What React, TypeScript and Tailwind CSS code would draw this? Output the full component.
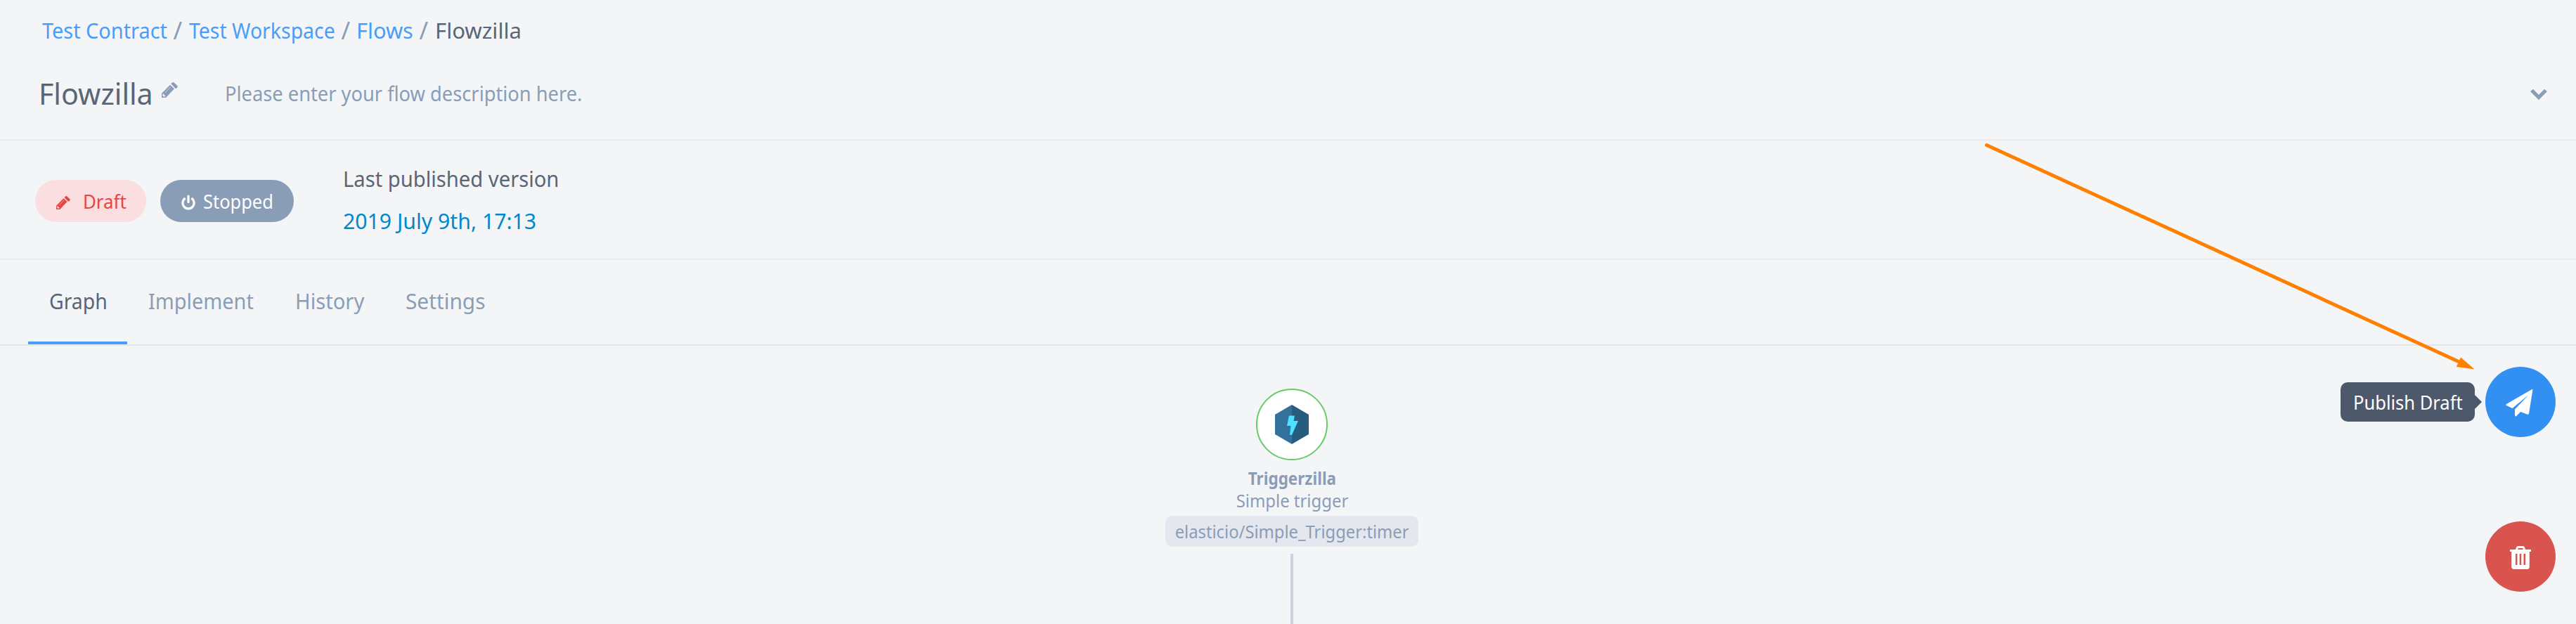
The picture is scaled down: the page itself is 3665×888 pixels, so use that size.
import type { ReactNode } from "react";

function Fit({ box = "", fit, children }: { box?: string; fit: string; children: ReactNode }) {
  return (
    <span className={`block shrink-0 whitespace-nowrap ${box}`}>
      <span className={`block w-max origin-left ${fit}`}>{children}</span>
    </span>
  );
}

function PencilIcon({ className, shine }: { className: string; shine: string }) {
  return (
    <svg viewBox="0 0 69 66" className={`shrink-0 ${className}`}>
      <path d="M0 48 36 11 54 28 18 66H0z" fill="currentColor" />
      <path d="M40 7 46 1q3-2 6 0L67 15q3 3 0 7l-7 6z" fill="currentColor" />
      <path d="M15 45 38 20" stroke={shine} strokeWidth="3" opacity="0.6" />
      <path d="M7 48l3 6 6 3-3 5H9l-5-5v-6z" fill={shine} />
    </svg>
  );
}

function Breadcrumbs() {
  return (
    <nav className="flex h-[86px] items-center pl-[60px] text-[31.4px] leading-10 text-[#4a9df8]">
      <Fit box="w-[186.5px]" fit="scale-x-[0.92]">Test Contract</Fit>
      <Fit box="w-[22px] text-[34px] text-[#8a9db7]" fit="">/</Fit>
      <Fit box="w-[217px]" fit="scale-x-[0.905]">Test Workspace</Fit>
      <Fit box="w-[21.5px] text-[34px] text-[#8a9db7]" fit="">/</Fit>
      <Fit box="w-[89.5px]" fit="scale-x-[0.98]">Flows</Fit>
      <Fit box="w-[22.5px] text-[34px] text-[#8a9db7]" fit="">/</Fit>
      <Fit box="text-[#5a6576]" fit="scale-x-[0.99]">Flowzilla</Fit>
    </nav>
  );
}

function TitleRow() {
  return (
    <div className="flex h-[90px] items-center pr-[41px] pl-[55px] text-[#8a9db7]">
      <h1 className="mt-1 w-[175px] text-[42px] leading-[60px] text-[#5a6576]">
        <Fit fit="scale-x-[0.98]">Flowzilla</Fit>
      </h1>
      <PencilIcon className="-mt-1.5 h-[22px] w-[23px]" shine="#f4f5f7" />
      <Fit box="mt-[3px] ml-[67px] text-[28.8px] leading-10" fit="scale-x-[0.947]">
        Please enter your flow description here.
      </Fit>
      <svg viewBox="0 0 24 16" className="mt-1.5 ml-auto h-4 w-6">
        <path d="M2 2.500 12 12.500 22 2.500" fill="none" stroke="currentColor" strokeWidth="5.200" />
      </svg>
    </div>
  );
}

function StatusBar() {
  return (
    <section className="flex h-[170px] items-center border-b-2 border-[#e8eaed] pl-[50px]">
      <span className="mt-1 flex h-[60px] w-[158px] items-center rounded-full bg-[#fbdee0] pl-[30px] text-[27.5px] leading-10 text-[#e54545]">
        <PencilIcon className="mt-[5px] h-[19px] w-5" shine="#fbdee0" />
        <Fit box="mt-0.5 ml-[17.5px]" fit="scale-x-[0.94]">Draft</Fit>
      </span>
      <span className="mt-1 ml-5 flex h-[60px] w-[190px] items-center rounded-full bg-[#8a9db7] pl-[30px] text-[27.5px] leading-10 text-white">
        <svg viewBox="0 0 20 22" className="mt-[3px] h-[22px] w-5" fill="none" stroke="currentColor" strokeWidth="3.200">
          <path d="M5.600 5A8.100 8.100 0 1 0 14.400 5" />
          <path d="M10 2.200v8.500" strokeLinecap="round" />
        </svg>
        <Fit box="mt-0.5 ml-[11px]" fit="scale-x-[0.925]">Stopped</Fit>
      </span>
      <div className="ml-[69.5px] text-[31.4px] leading-[60px] text-[#5a6576]">
        <Fit fit="scale-x-[0.93]">Last published version</Fit>
        <Fit box="text-[#0088cc]" fit="scale-x-[0.963]">2019 July 9th, 17:13</Fit>
      </div>
    </section>
  );
}

function Tabs() {
  return (
    <section className="flex h-[122px] border-b-2 border-[#e4e7ea] pl-10 text-[31.4px] leading-[116px] text-[#8a9db7]">
      <div className="w-[141px] border-b-4 border-[#4a9df8] pl-[29.5px] text-[#5a6576]">
        <Fit fit="scale-x-[0.905]">Graph</Fit>
      </div>
      <Fit box="ml-[30px] w-[208.500px]" fit="scale-x-[0.92]">Implement</Fit>
      <Fit box="w-[157px]" fit="scale-x-[0.93]">History</Fit>
      <Fit fit="scale-x-[0.95]">Settings</Fit>
    </section>
  );
}

function TriggerNode() {
  return (
    <div className="absolute top-[61px] left-[1658px] flex w-[360px] flex-col items-center text-[25.3px] text-[#8a9db7]">
      <div className="flex size-[102px] items-center justify-center rounded-full border-2 border-[#66cc66] bg-white">
        <svg viewBox="0 0 48 56" className="h-14 w-12">
          <path d="M24 0 0 14v28l24 14z" fill="#32719b" />
          <path d="M24 0l24 14v28L24 56z" fill="#275c7f" />
          <path d="M20 15.500h8L26.500 23h6.500L24 43h-3l1.500-13H17z" fill="#4fe0ff" />
        </svg>
      </div>
      <div className="mt-[9px] origin-center scale-x-[0.89] leading-8 font-bold">Triggerzilla</div>
      <div className="origin-center scale-x-[0.945] leading-8">Simple trigger</div>
      <div className="mt-1.5 flex h-11 w-[360px] items-center justify-center rounded-[10px] bg-[#e4e7ee]">
        <span className="mt-0.5 scale-x-[0.94] whitespace-nowrap">elasticio/Simple_Trigger:timer</span>
      </div>
      <div className="mt-2.5 h-[100px] w-1 bg-[#ccd3df]" />
    </div>
  );
}

function Canvas() {
  return (
    <main className="relative h-[396px] overflow-hidden">
      <TriggerNode />
      <button className="absolute top-[30px] right-[29px] flex size-[100px] items-center justify-center rounded-full bg-[#3290f2] text-white">
        <svg viewBox="0 0 39 39" className="mt-0.5 mr-1 h-[39px] w-[39px]">
          <path
            d="M38.500.3Q37.800-.2 36.500.6L1 21q-1.500 1 0 2l8.500 4L32.500 8 13 28.500V37q.2 2 2 1.300L21 32l10 3.800q1.600.4 2-1.300z"
            fill="currentColor"
          />
        </svg>
      </button>
      <div className="absolute top-[52px] right-[134px] flex items-center">
        <div className="flex h-14 w-[191px] items-center rounded-[10px] bg-[#4d586a] pt-0.5 pl-[17.5px] text-[27.5px] text-white">
          <Fit fit="scale-x-[0.928]">Publish Draft</Fit>
        </div>
        <svg viewBox="0 0 10 20" className="h-5 w-2.5">
          <path d="M0 0l10 10L0 20z" fill="#4d586a" />
        </svg>
      </div>
      <button className="absolute top-[250px] right-[29px] flex size-[100px] items-center justify-center rounded-full bg-[#d9534f] text-white">
        <svg viewBox="0 0 30 33" className="mt-[3px] h-[33px] w-[30px]">
          <path
            d="M8 5 9.300 1.500Q9.800 0 11.500 0h7Q20.200 0 20.700 1.500L22 5h8v3h-2.200v21q0 4-3.500 4H5.700q-3.500 0-3.500-4V8H0V5zM11 5h8l-.8-2h-6.400zM8 11v16h2.500V11zM13.700 11v16h2.500V11zM19.500 11v16H22V11z"
            fill="currentColor"
            fillRule="evenodd"
          />
        </svg>
      </button>
    </main>
  );
}

export default function App() {
  return (
    <div className="relative flex h-[888px] w-[3665px] flex-col overflow-hidden bg-[#f4f5f7] font-['Noto_Sans',sans-serif]">
      <header className="h-[200px] border-b-2 border-[#e8eaed]">
        <Breadcrumbs />
        <TitleRow />
      </header>
      <StatusBar />
      <Tabs />
      <Canvas />
      <svg viewBox="0 0 710 330" className="pointer-events-none absolute top-[200px] left-[2820px] h-[330px] w-[710px]">
        <path d="M6.500 6.500 680 315.500" stroke="#ff8000" strokeWidth="5" strokeLinecap="round" />
        <path d="M700.500 325.500 681 308.500l-6.200 13.500z" fill="#ff8000" />
      </svg>
    </div>
  );
}
